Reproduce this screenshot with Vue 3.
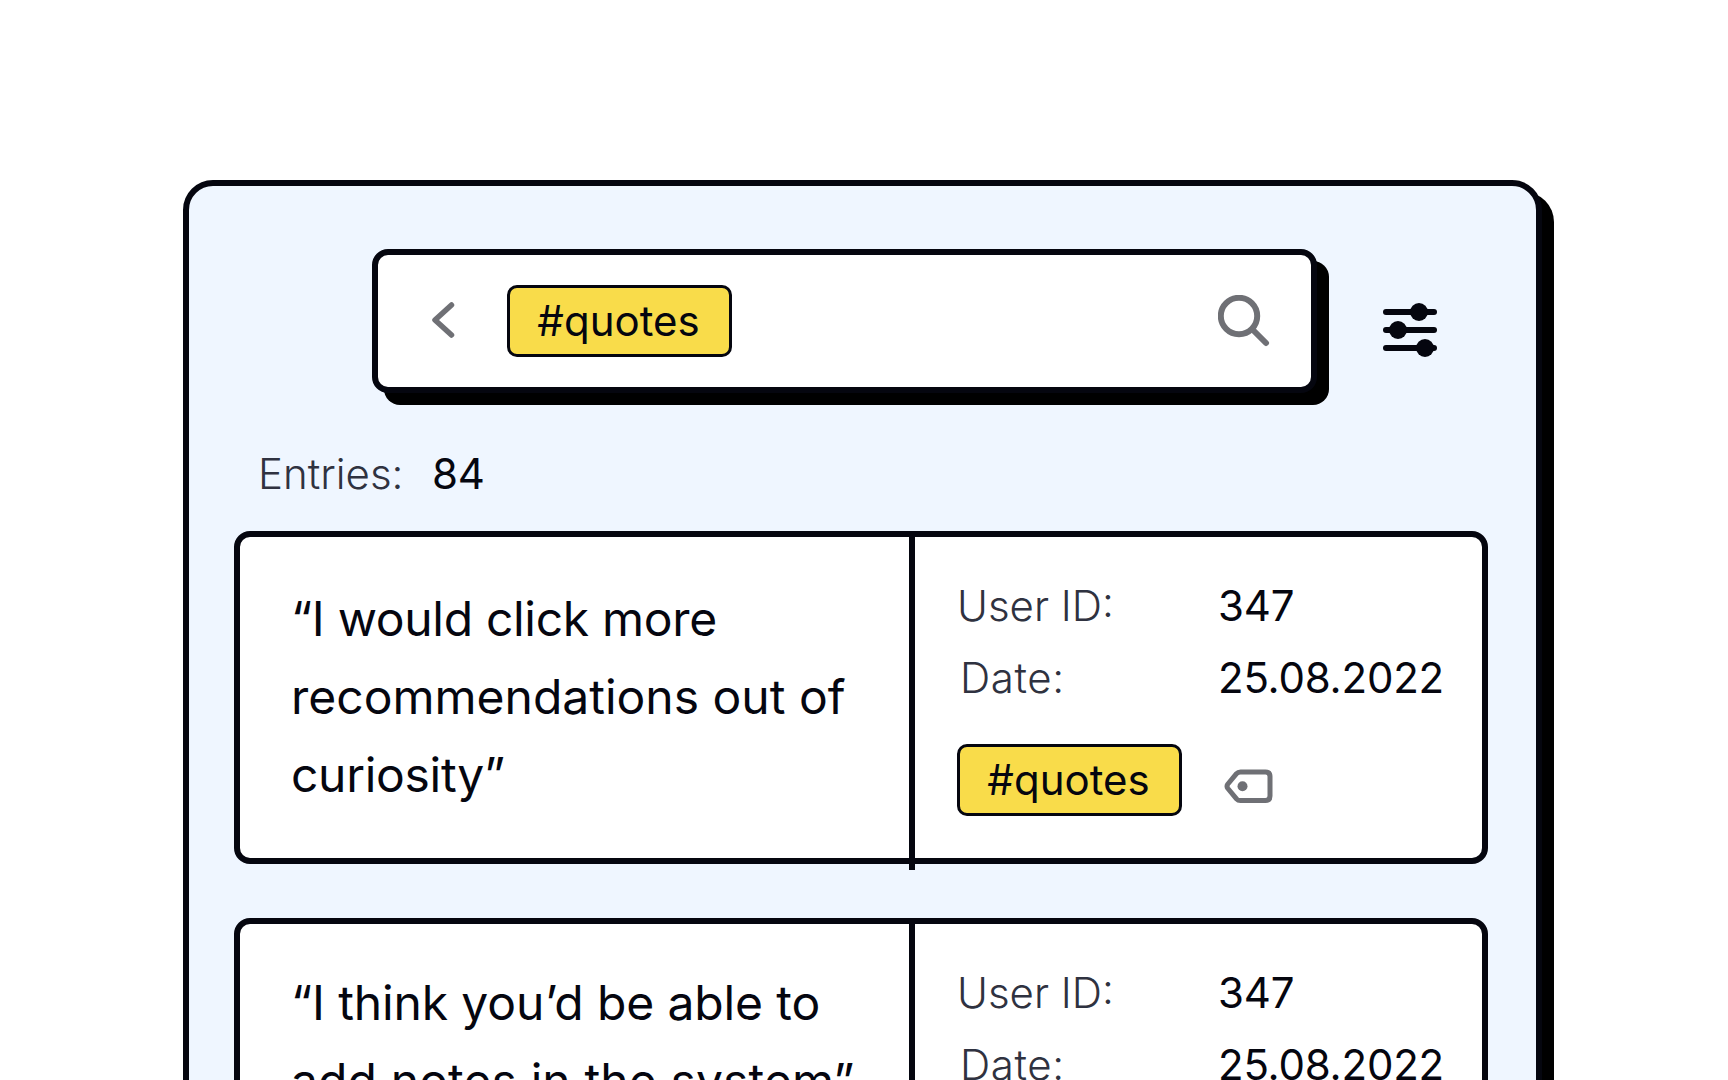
<script setup>
const entries = [
  {
    id: 1,
    tagged: true,
    lines: [
      { text: '“I would click more', track: -0.3 },
      { text: 'recommendations out of', track: 0 },
      { text: 'curiosity”', track: -0.3 },
    ],
  },
  {
    id: 2,
    tagged: false,
    lines: [
      { text: '“I think you’d be able to', track: -0.12 },
      { text: 'add notes in the system”', track: 0.12 },
    ],
  },
]
</script>

<template>
  <div class="page">
    <main class="panel">
      <header class="toolbar">
        <div class="search">
          <svg class="chevron" width="24" height="36" viewBox="0 0 24 36" fill="none">
            <path d="M20.5 3 L4 18 L20.5 33" stroke="#6f7075" stroke-width="5.5" stroke-linecap="round" stroke-linejoin="round" />
          </svg>
          <span class="tag">#quotes</span>
          <svg class="magnifier" width="52" height="52" viewBox="0 0 52 52" fill="none">
            <circle cx="21" cy="21" r="18.2" stroke="#6f7075" stroke-width="6" />
            <path d="M35 35 L48 48" stroke="#6f7075" stroke-width="6" stroke-linecap="round" />
          </svg>
        </div>
        <svg class="sliders" width="54" height="54" viewBox="0 0 54 54" fill="none">
          <g stroke="#05060f" stroke-width="6" stroke-linecap="round">
            <path d="M3 9 H51" />
            <path d="M3 27 H51" />
            <path d="M3 45 H51" />
          </g>
          <g fill="#05060f">
            <circle cx="36" cy="9" r="9" />
            <circle cx="15" cy="27" r="9" />
            <circle cx="42" cy="45" r="9" />
          </g>
        </svg>
      </header>

      <p class="count"><span class="count-label">Entries:</span><span class="count-value">84</span></p>

      <section class="list">
        <article v-for="entry in entries" :key="entry.id" class="entry" :class="{ 'entry--open': !entry.tagged }">
          <div class="quote">
            <div v-for="line in entry.lines" :key="line.text" :style="{ letterSpacing: line.track + 'px' }">{{ line.text }}</div>
          </div>
          <div class="meta">
            <div class="row"><span class="label">User ID:</span><span class="value">347</span></div>
            <div class="row"><span class="label label--date">Date:</span><span class="value">25.08.2022</span></div>
            <div v-if="entry.tagged" class="tags">
              <span class="tag">#quotes</span>
              <svg class="tag-icon" width="50" height="36" viewBox="0 0 50 36" fill="none">
                <path d="M3.9 15 L12.5 4.7 Q14 3 16.5 3 H41.5 Q46 3 46 7.5 V27 Q46 31.5 41.5 31.5 H16.5 Q14 31.5 12.5 29.8 L3.9 19.5 Q2.2 17.2 3.9 15 Z" stroke="#6f7075" stroke-width="5" stroke-linejoin="round" />
                <circle cx="18.5" cy="17.3" r="5" fill="#6f7075" />
              </svg>
            </div>
          </div>
        </article>
      </section>
    </main>
  </div>
</template>

<style>
html, body {
  margin: 0;
  background: #fff;
  overflow: hidden;
}
</style>

<style scoped>
.page {
  height: 1080px;
  overflow: hidden;
  box-sizing: border-box;
  padding: 180px 0 0 183px;
  font-family: Inter, "Noto Sans", sans-serif;
  color: #05060f;
}
.panel {
  box-sizing: border-box;
  width: 1359px;
  height: 1000px;
  padding: 63px 48px 0 45px;
  background: #eff6ff;
  border: 6px solid #05060f;
  border-radius: 30px;
  box-shadow: 12px 12px 0 #000;
}
.toolbar {
  display: flex;
  align-items: center;
  gap: 66px;
  margin-left: 138px;
}
.search {
  box-sizing: border-box;
  display: flex;
  align-items: center;
  width: 945px;
  height: 144px;
  padding: 0 0 0 53px;
  background: #fff;
  border: 6px solid #05060f;
  border-radius: 16px;
  box-shadow: 12px 12px 0 #000;
}
.chevron {
  flex: none;
  margin-right: 52px;
  margin-top: -2px;
}
.magnifier {
  flex: none;
  margin-left: auto;
  margin-right: 41px;
}
.sliders {
  flex: none;
  margin-top: 18px;
}
.tag {
  box-sizing: border-box;
  display: inline-flex;
  align-items: center;
  justify-content: center;
  flex: none;
  width: 225px;
  height: 72px;
  padding-right: 2px;
  background: #f9dc4a;
  border: 3px solid #05060f;
  border-radius: 10px;
  font-size: 42px;
  line-height: 1;
}
.count {
  display: flex;
  margin: 56px 0 32px 24px;
  font-size: 42px;
  line-height: 50px;
}
.count-label {
  width: 174px;
  font-weight: 300;
  color: #2f3240;
}
.count-value,
.value {
  letter-spacing: -0.2px;
}
.list {
  display: flex;
  flex-direction: column;
  gap: 54px;
}
.entry {
  box-sizing: border-box;
  display: grid;
  grid-template-columns: 675px 1fr;
  height: 333px;
  background: #fff;
  border: 6px solid #05060f;
  border-radius: 16px;
}
.entry--open {
  height: 400px;
}
.quote {
  box-sizing: border-box;
  margin-bottom: -12px;
  padding: 43px 0 0 51px;
  border-right: 6px solid #05060f;
  font-size: 48px;
  line-height: 78px;
}
.entry--open .quote {
  padding-top: 40px;
}
.meta {
  padding: 33px 0 0 42px;
}
.row {
  display: flex;
  font-size: 42px;
  line-height: 72px;
}
.label {
  width: 261px;
  font-weight: 300;
  color: #2f3240;
}
.label--date {
  box-sizing: border-box;
  padding-left: 3px;
  letter-spacing: 0.6px;
}
.tags {
  display: flex;
  align-items: flex-start;
  gap: 42px;
  margin-top: 30px;
}
.tag-icon {
  flex: none;
  margin-top: 25px;
}
</style>
